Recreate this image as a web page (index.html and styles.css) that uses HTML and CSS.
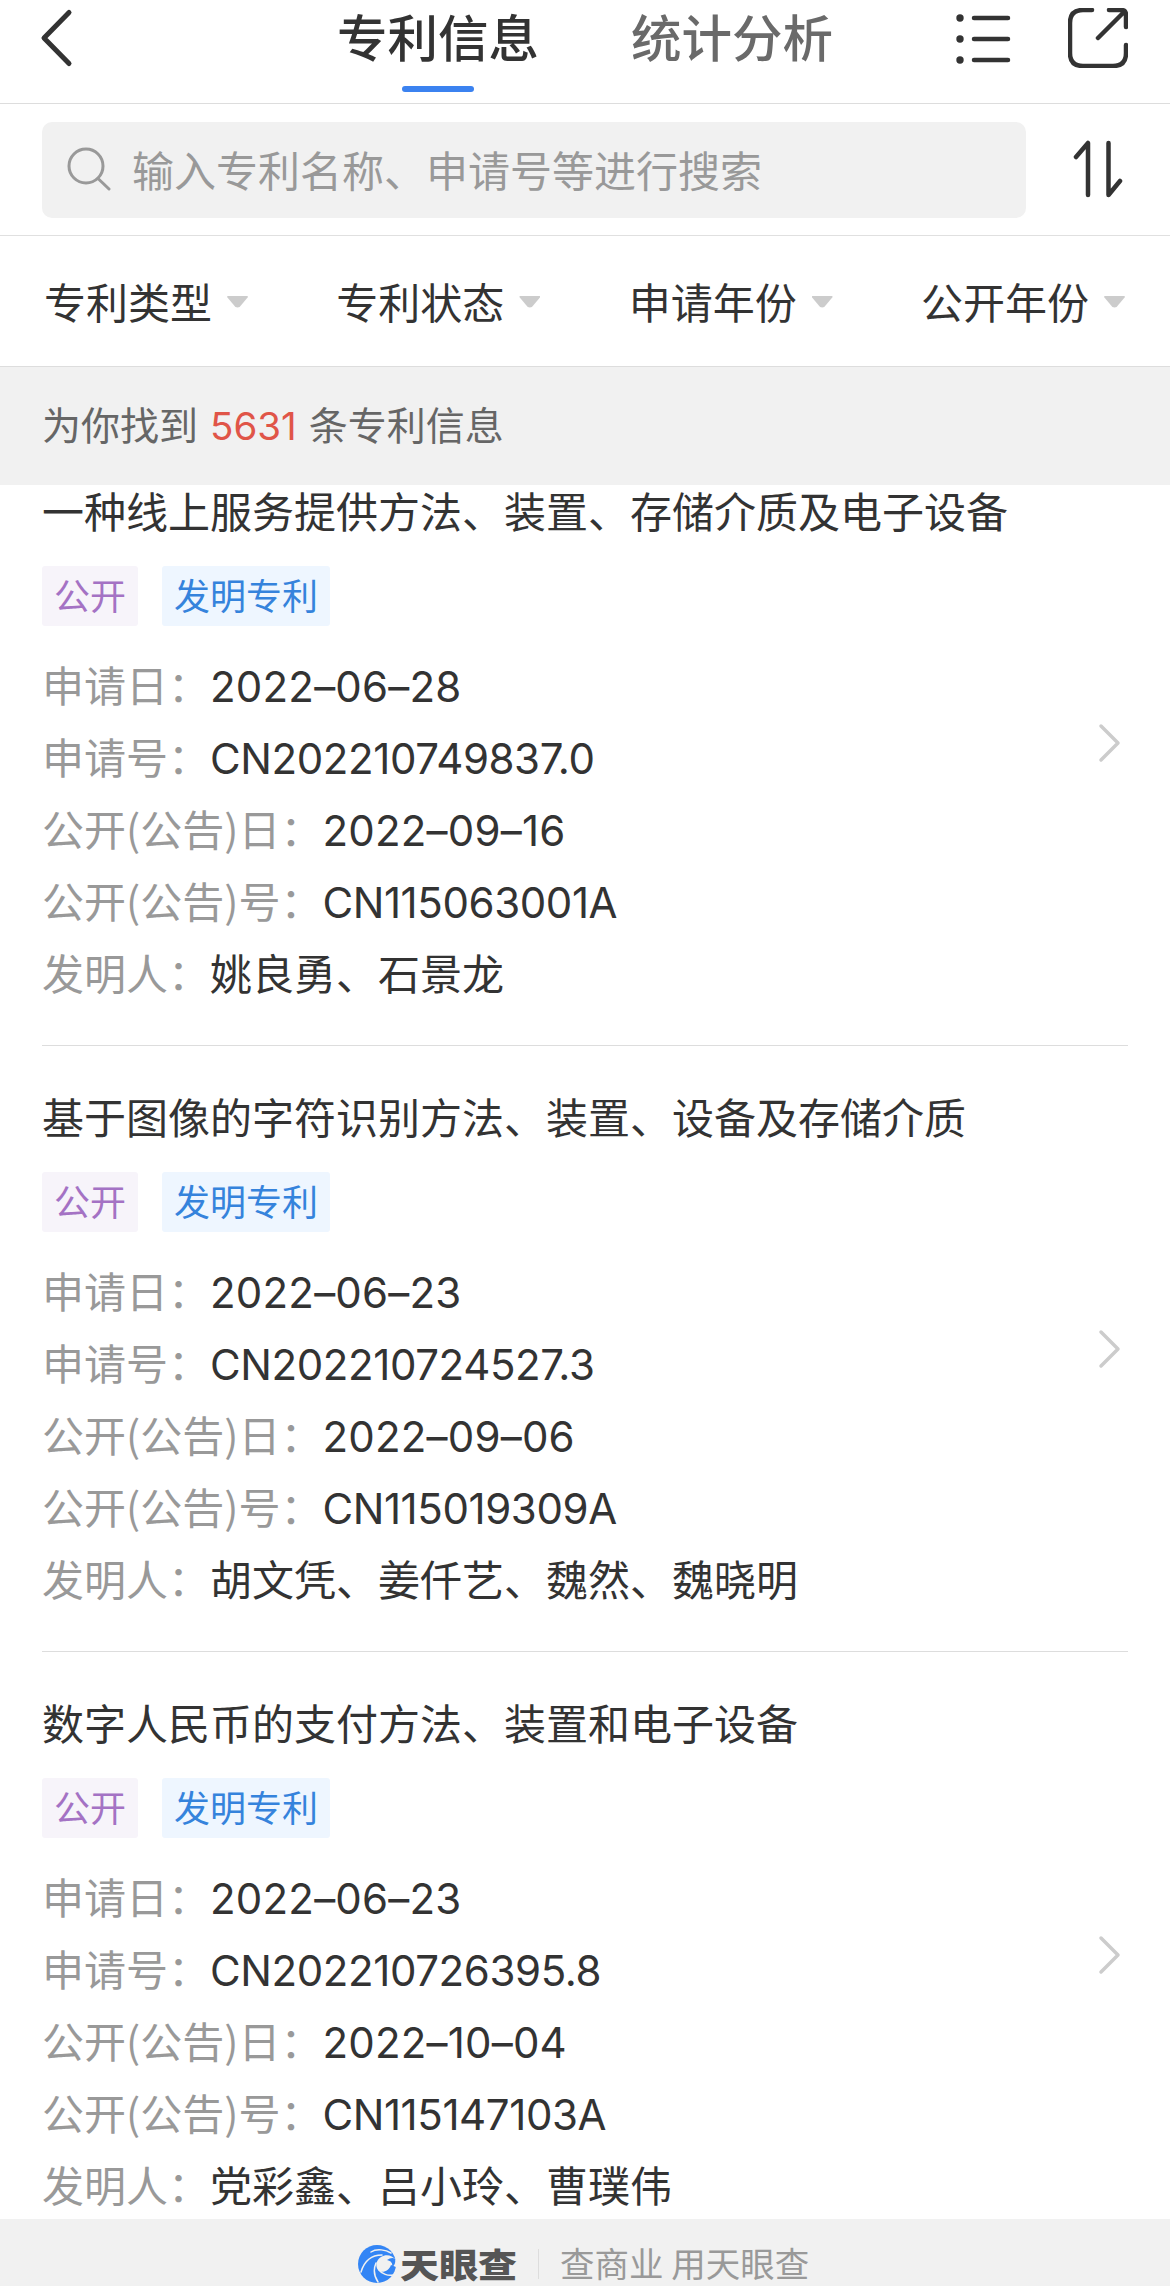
FILE: index.html
```
<!DOCTYPE html>
<html lang="zh-CN">
  <head>
    <meta charset="utf-8" />
    <title>专利信息</title>
    <link rel="stylesheet" href="styles.css">
  </head>
  <body>
    <header class="navbar">
      <svg class="back" width="36" height="60" viewBox="0 0 36 60">
        <path d="M30 4.500L5 30L30 55.500" />
      </svg>
      <nav class="tabs">
        <a class="tab active">专利信息</a>
        <a class="tab">统计分析</a>
      </nav>
      <div class="actions">
        <svg class="list-icon" width="56" height="52" viewBox="0 0 56 52">
          <path d="M18 5H52M18 26H52M18 47H52" />
          <circle cx="4" cy="5" r="3.700" />
          <circle cx="4" cy="26" r="3.700" />
          <circle cx="4" cy="47" r="3.700" />
        </svg>
        <svg class="share-icon" width="60" height="60" viewBox="0 0 60 60">
          <path d="M24 2H15Q2 2 2 15V45Q2 58 15 58H45Q58 58 58 45V37M41 2H53Q58 2 58 7V19M56 4L30 30" />
        </svg>
      </div>
    </header>

    <div class="search">
      <div class="search-box">
        <svg class="search-icon" width="44" height="46" viewBox="0 0 44 46">
          <circle cx="19" cy="20" r="17" />
          <path d="M31 32.500L42 43" />
        </svg>
        <span>输入专利名称、申请号等进行搜索</span>
      </div>
      <svg class="sort-icon" width="50" height="60" viewBox="0 0 50 60">
        <path d="M3 18L15 4V56M35.500 4V56L47 42" />
      </svg>
    </div>

    <div class="filters">
      <div class="filter">专利类型<i class="caret"></i></div>
      <div class="filter">专利状态<i class="caret"></i></div>
      <div class="filter">申请年份<i class="caret"></i></div>
      <div class="filter">公开年份<i class="caret"></i></div>
    </div>

    <div class="result">为你找到<b>5631</b>条专利信息</div>

    <main class="list">
      <div class="item">
        <h2>一种线上服务提供方法、装置、存储介质及电子设备</h2>
        <div class="tags"><span class="tag purple">公开</span><span class="tag blue">发明专利</span></div>
        <p>申请日：<span class="num date">2022–06–28</span></p>
        <p>申请号：<span class="num">CN202210749837.0</span></p>
        <p>公开(公告)日：<span class="num date">2022–09–16</span></p>
        <p>公开(公告)号：<span class="num">CN115063001A</span></p>
        <p>发明人：<span class="name">姚良勇、石景龙</span></p>
        <svg class="arrow" width="24" height="40" viewBox="0 0 24 40"><path d="M3 3L20 20L3 37" /></svg>
      </div>
      <div class="item">
        <h2>基于图像的字符识别方法、装置、设备及存储介质</h2>
        <div class="tags"><span class="tag purple">公开</span><span class="tag blue">发明专利</span></div>
        <p>申请日：<span class="num date">2022–06–23</span></p>
        <p>申请号：<span class="num">CN202210724527.3</span></p>
        <p>公开(公告)日：<span class="num date">2022–09–06</span></p>
        <p>公开(公告)号：<span class="num">CN115019309A</span></p>
        <p>发明人：<span class="name">胡文凭、姜仟艺、魏然、魏晓明</span></p>
        <svg class="arrow" width="24" height="40" viewBox="0 0 24 40"><path d="M3 3L20 20L3 37" /></svg>
      </div>
      <div class="item">
        <h2>数字人民币的支付方法、装置和电子设备</h2>
        <div class="tags"><span class="tag purple">公开</span><span class="tag blue">发明专利</span></div>
        <p>申请日：<span class="num date">2022–06–23</span></p>
        <p>申请号：<span class="num">CN202210726395.8</span></p>
        <p>公开(公告)日：<span class="num date">2022–10–04</span></p>
        <p>公开(公告)号：<span class="num">CN115147103A</span></p>
        <p>发明人：<span class="name">党彩鑫、吕小玲、曹璞伟</span></p>
        <svg class="arrow" width="24" height="40" viewBox="0 0 24 40"><path d="M3 3L20 20L3 37" /></svg>
      </div>
    </main>

    <footer class="footer">
      <svg class="logo" width="38" height="38" viewBox="0 0 38 38">
        <circle class="disc" cx="19" cy="19" r="19" />
        <path class="hole" d="M38 15C34 10 28 9 23 12C18 15 17 21 20 25C24 29 31 26 33 20L38 22Z" />
        <path class="ball" d="M29 15C33 16 35 18 34 22C36 21 38 18 37 14C35 12 32 13 29 15Z" />
        <path class="cut" d="M13 7C19 3 28 5 33 8M3 27C6 17 13 10 24 10M18 18C15 25 16 31 20 37M21 25C24 29 30 31 35 30" />
      </svg>
      <span class="brand">天眼查</span>
      <i class="line"></i>
      <span class="slogan">查商业 用天眼查</span>
    </footer>
  </body>
</html>
```

FILE: styles.css
```
* {
  box-sizing: border-box;
}
body {
  margin: 0;
  height: 2286px;
  overflow: hidden;
  display: flex;
  flex-direction: column;
  background-color: #fff;
  color: #333;
  font-family: "Noto Sans CJK SC", sans-serif;
  font-size: 42px;
}
svg {
  display: block;
  flex: none;
  fill: none;
  stroke: #333;
  stroke-width: 4.5;
  stroke-linecap: round;
  stroke-linejoin: round;
}
.navbar {
  height: 104px;
  flex: none;
  display: flex;
  align-items: flex-start;
  padding-left: 39px;
  padding-right: 42px;
  border-bottom: 1px solid #ddd;
}
.back {
  margin-top: 8px;
  stroke-width: 5;
}
.tabs {
  display: flex;
  gap: 92px;
  margin-left: 262px;
}
.tab {
  width: 202px;
  height: 92px;
  font-size: 50.5px;
  line-height: 70px;
  font-weight: 500;
  color: #6a6a6a;
  white-space: nowrap;
}
.tab.active {
  color: #333;
}
.tab.active::after {
  content: "";
  display: block;
  width: 72px;
  height: 6px;
  margin: 16px auto 0;
  border-radius: 3px;
  background-color: #3b82f0;
}
.actions {
  display: flex;
  margin-left: auto;
}
.list-icon {
  margin-top: 13px;
  margin-right: 56px;
}
.list-icon circle {
  fill: #333;
  stroke: none;
}
.share-icon {
  margin-top: 8px;
}
.search {
  height: 132px;
  flex: none;
  display: flex;
  align-items: center;
  padding-left: 42px;
  padding-right: 47px;
  border-bottom: 1px solid #e0e0e0;
}
.search-box {
  width: 984px;
  height: 96px;
  margin-top: 1px;
  padding-left: 25px;
  padding-bottom: 3px;
  display: flex;
  align-items: center;
  border-radius: 10px;
  background-color: #f1f1f1;
  color: #999;
}
.search-box span {
  margin-left: 21px;
}
.search-icon {
  stroke: #999;
  stroke-width: 3;
}
.sort-icon {
  margin-left: auto;
  margin-bottom: 2px;
}
.filters {
  height: 131px;
  flex: none;
  display: flex;
  justify-content: space-between;
  align-items: center;
  padding-left: 44px;
  padding-right: 45px;
  padding-bottom: 1px;
  border-bottom: 1px solid #ddd;
}
.filter {
  display: flex;
  align-items: center;
}
.caret {
  width: 21px;
  height: 12px;
  margin-top: 2px;
  margin-left: 15px;
  background-color: #ccc;
  clip-path: polygon(4% 0, 96% 0, 100% 12%, 60% 96%, 50% 100%, 40% 96%, 0 12%);
}
.result {
  height: 118px;
  flex: none;
  padding-left: 42px;
  line-height: 113px;
  font-size: 39px;
  background-color: #f1f1f1;
  color: #666;
}
.result b {
  margin: 0 12px;
  font-family: Inter, sans-serif;
  font-weight: 400;
  font-size: 38.500px;
  color: #e05548;
}
.list {
  flex: none;
  height: 1734px;
  overflow: hidden;
  padding: 0 42px;
}
.item {
  position: relative;
  height: 606px;
  padding-top: 44px;
  border-bottom: 1px solid #ddd;
}
.item:first-child {
  height: 561px;
  padding-top: 0;
}
.item h2 {
  margin: 0;
  height: 60px;
  line-height: 52px;
  font-size: 42px;
  font-weight: 400;
}
.item:first-child h2 {
  height: 59px;
  line-height: 50px;
}
.tags {
  display: flex;
  gap: 24px;
  height: 60px;
  margin-top: 22px;
  margin-bottom: 22px;
}
.tag {
  height: 60px;
  padding: 0 12px;
  line-height: 57px;
  font-size: 36px;
  border-radius: 3px;
}
.purple {
  background-color: #f7f4fa;
  color: #a472c4;
}
.blue {
  background-color: #eef6ff;
  color: #3583dc;
}
.item p {
  margin: 0;
  height: 72px;
  line-height: 72px;
  color: #999;
}
.num {
  font-family: Inter, sans-serif;
  font-size: 42px;
  letter-spacing: -0.4px;
  color: #333;
}
.date {
  letter-spacing: 0.2px;
}
.name {
  color: #333;
}
.arrow {
  position: absolute;
  right: 6px;
  bottom: 282px;
  stroke: #ccc;
  stroke-width: 3.500;
}
.footer {
  height: 67px;
  flex: none;
  display: flex;
  align-items: center;
  padding-left: 358px;
  padding-top: 23px;
  background-color: #f1f1f1;
}
.logo .disc,
.logo .ball {
  fill: #3385f5;
  stroke: none;
}
.logo .hole {
  fill: #f1f1f1;
  stroke: none;
}
.logo .cut {
  stroke: #f1f1f1;
  stroke-width: 1.500;
}
.brand {
  margin-left: 4px;
  margin-bottom: 3px;
  font-size: 39px;
  font-weight: 900;
  line-height: 40px;
  color: #555;
  transform: scaleY(0.86);
}
.line {
  width: 1px;
  height: 30px;
  margin-left: 21px;
  margin-right: 21px;
  background-color: #ddd;
}
.slogan {
  margin-bottom: 4px;
  font-size: 34.500px;
  line-height: 40px;
  color: #999;
}
```
